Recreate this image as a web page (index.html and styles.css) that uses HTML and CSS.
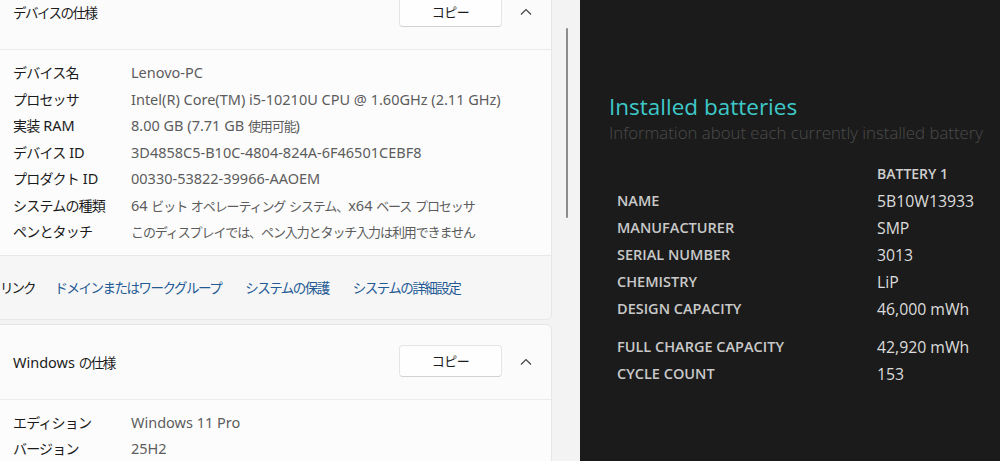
FILE: index.html
```html
<!DOCTYPE html>
<html lang="ja">
<head>
    <meta charset="UTF-8">
    <title>システムの仕様 / Battery report</title>
    <link rel="stylesheet" href="styles.css">
</head>
<body>
    <div class="settings">
        <div class="pane">
            <div class="card">
                <div class="card-head">
                    <span class="card-title"><span class="ja">デバイスの仕様</span></span>
                    <button class="copy-btn">コピー</button>
                    <span class="chevron">
                        <svg width="12" height="8" viewBox="0 0 12 8"><path d="M1 6.5 L6 1.5 L11 6.5" fill="none" stroke="#444" stroke-width="1.2"/></svg>
                    </span>
                </div>
                <div class="card-body">
                    <div class="spec-row"><span class="spec-label"><span class="ja">デバイス名</span></span><span class="spec-value">Lenovo-PC</span></div>
                    <div class="spec-row"><span class="spec-label"><span class="ja">プロセッサ</span></span><span class="spec-value">Intel(R) Core(TM) i5-10210U CPU @ 1.60GHz (2.11 GHz)</span></div>
                    <div class="spec-row"><span class="spec-label"><span class="ja">実装</span> RAM</span><span class="spec-value">8.00 GB (7.71 GB <span class="ja">使用可能</span>)</span></div>
                    <div class="spec-row"><span class="spec-label"><span class="ja">デバイス</span> ID</span><span class="spec-value">3D4858C5-B10C-4804-824A-6F46501CEBF8</span></div>
                    <div class="spec-row"><span class="spec-label"><span class="ja">プロダクト</span> ID</span><span class="spec-value">00330-53822-39966-AAOEM</span></div>
                    <div class="spec-row"><span class="spec-label"><span class="ja">システムの種類</span></span><span class="spec-value">64 <span class="ja">ビット</span> <span class="ja">オペレーティング</span> <span class="ja">システム、</span>x64 <span class="ja">ベース</span> <span class="ja">プロセッサ</span></span></div>
                    <div class="spec-row"><span class="spec-label"><span class="ja">ペンとタッチ</span></span><span class="spec-value"><span class="ja">このディスプレイでは、ペン入力とタッチ入力は利用できません</span></span></div>
                </div>
                <div class="link-row">
                    <span class="link-label ja">リンク</span>
                    <a class="link ja">ドメインまたはワークグループ</a>
                    <a class="link ja">システムの保護</a>
                    <a class="link ja">システムの詳細設定</a>
                </div>
            </div>

            <div class="card">
                <div class="card-head">
                    <span class="card-title">Windows <span class="ja">の仕様</span></span>
                    <button class="copy-btn">コピー</button>
                    <span class="chevron">
                        <svg width="12" height="8" viewBox="0 0 12 8"><path d="M1 6.5 L6 1.5 L11 6.5" fill="none" stroke="#444" stroke-width="1.2"/></svg>
                    </span>
                </div>
                <div class="card-body">
                    <div class="spec-row"><span class="spec-label"><span class="ja">エディション</span></span><span class="spec-value">Windows 11 Pro</span></div>
                    <div class="spec-row"><span class="spec-label"><span class="ja">バージョン</span></span><span class="spec-value">25H2</span></div>
                </div>
            </div>
        </div>
        <div class="scroll-track"><div class="scroll-thumb"></div></div>
    </div>

    <div class="report">
        <h1 class="report-title">Installed batteries</h1>
        <p class="report-sub">Information about each currently installed battery</p>
        <table class="bat-table">
            <tr><td></td><th>BATTERY 1</th></tr>
            <tr><td class="bat-label">NAME</td><td class="bat-value">5B10W13933</td></tr>
            <tr><td class="bat-label">MANUFACTURER</td><td class="bat-value">SMP</td></tr>
            <tr><td class="bat-label">SERIAL NUMBER</td><td class="bat-value">3013</td></tr>
            <tr><td class="bat-label">CHEMISTRY</td><td class="bat-value">LiP</td></tr>
            <tr><td class="bat-label">DESIGN CAPACITY</td><td class="bat-value">46,000 mWh</td></tr>
            <tr class="spacer"><td colspan="2"></td></tr>
            <tr><td class="bat-label">FULL CHARGE CAPACITY</td><td class="bat-value">42,920 mWh</td></tr>
            <tr><td class="bat-label">CYCLE COUNT</td><td class="bat-value">153</td></tr>
        </table>
    </div>
</body>
</html>
```

FILE: styles.css
```css
body {
    margin: 0;
    height: 461px;
    overflow: hidden;
    display: flex;
    font-family: "Noto Sans", "Noto Sans CJK JP", sans-serif;
}
.settings {
    width: 580px;
    flex-shrink: 0;
    display: flex;
    background: #f3f3f3;
    overflow: hidden;
}
/* japanese runs: Noto CJK kana is wider than Yu Gothic UI, so tighten */
.ja {
    font-family: "Noto Sans CJK JP", sans-serif;
    font-size: 14px;
    letter-spacing: -0.8px;
}
.pane {
    width: 560px;
    margin-left: -8px;
    margin-top: -26px;
    display: flex;
    flex-direction: column;
    gap: 4px;
}
.card {
    background: #fbfbfb;
    border: 1px solid #e6e6e6;
    border-radius: 6px;
}
.card-head {
    height: 74px;
    display: flex;
    align-items: center;
    padding-left: 20px;
    padding-right: 9px;
    border-bottom: 1px solid #ebebeb;
}
.card-title {
    flex: 1;
    font-size: 14.5px;
    color: #1b1b1b;
}
.card-title .ja {
    font-size: 13.5px;
    letter-spacing: -1.5px;
}
.copy-btn {
    width: 103px;
    height: 32px;
    background: #fefefe;
    border: 1px solid #e5e5e5;
    border-bottom-color: #d2d2d2;
    border-radius: 4px;
    font-family: "Noto Sans CJK JP", sans-serif;
    font-size: 13px;
    letter-spacing: -0.5px;
    color: #1b1b1b;
    margin-right: 8px;
    margin-top: -2px;
}
.chevron {
    width: 32px;
    height: 32px;
    display: flex;
    align-items: center;
    justify-content: center;
}
.card-body {
    padding: 9px 0 10px 20px;
    background: #fcfcfc;
}
.spec-row {
    display: flex;
    height: 26.5px;
    align-items: center;
    font-size: 14.5px;
}
.spec-label {
    width: 118px;
    flex-shrink: 0;
    color: #1b1b1b;
}
.spec-value {
    color: #5c5c5c;
    white-space: nowrap;
}
.spec-value .ja {
    font-size: 13px;
    letter-spacing: -1.1px;
}
.link-row {
    height: 63px;
    display: flex;
    align-items: center;
    gap: 24px;
    padding-left: 7px;
    background: #f6f6f6;
    border-top: 1px solid #e8e8e8;
    border-radius: 0 0 6px 6px;
}
.link-label {
    color: #1b1b1b;
    font-size: 13.5px;
    margin-right: -4px;
    letter-spacing: -2px;
}
.link {
    color: #245a94;
    font-size: 13.5px;
    letter-spacing: -1.5px;
}
.scroll-track {
    width: 20px;
    position: relative;
}
.scroll-thumb {
    position: absolute;
    left: 14px;
    top: 28px;
    width: 2px;
    height: 190px;
    border-radius: 1px;
    background: #8c8c8c;
}
.report {
    flex: 1;
    background: #1b1b1b;
    padding: 91px 0 0 29px;
    font-family: "Open Sans", "Noto Sans", sans-serif;
}
.report-title {
    margin: 0;
    font-size: 22.5px;
    font-weight: 400;
    color: #3ec9c9;
    line-height: 31px;
}
.report-sub {
    margin: 0;
    font-size: 16.8px;
    font-weight: 300;
    color: #4b4b4b;
    line-height: 22px;
    white-space: nowrap;
}
.bat-table {
    margin-top: 16px;
    margin-left: 4px;
    border-collapse: collapse;
}
.bat-table th {
    text-align: left;
    font-size: 14px;
    font-weight: 600;
    color: #cfcfcf;
    height: 24px;
    padding: 0;
}
.bat-table td {
    padding: 0;
    height: 27px;
}
.bat-label {
    width: 260px;
    font-size: 14.5px;
    font-weight: 600;
    color: #c9c9c9;
    padding-left: 4px !important;
}
.bat-value {
    font-size: 15.8px;
    color: #dcdcdc;
}
.bat-table .spacer td {
    height: 11px;
}
```
